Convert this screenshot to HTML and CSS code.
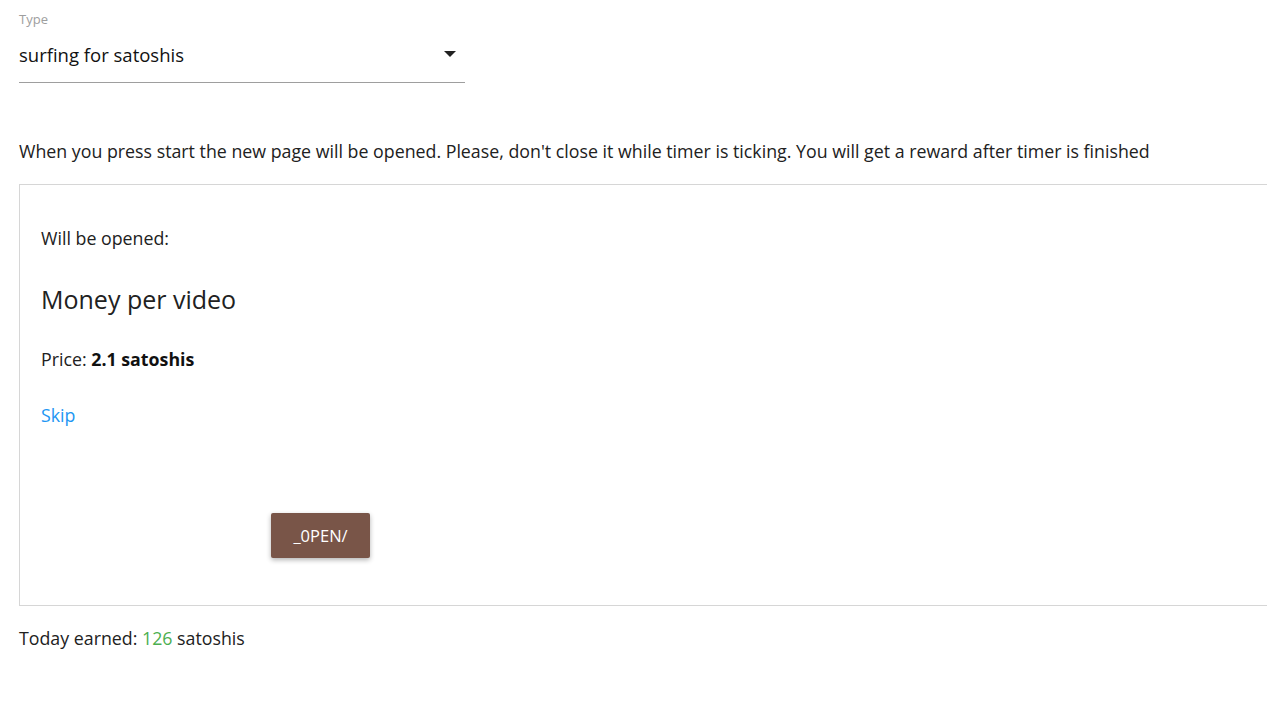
FILE: index.html
```html
<!DOCTYPE html>
<html lang="en">
<head>
    <meta charset="UTF-8">
    <meta name="viewport" content="width=device-width, initial-scale=1.0">
    <title>Surfing</title>
    <link rel="stylesheet" href="styles.css">
</head>
<body>
    <section class="surf-page">
        <div class="type-field">
            <label class="type-label">Type</label>
            <div class="type-select">
                <span>surfing for satoshis</span>
                <svg class="select-arrow" width="12" height="6" viewBox="0 0 12 6"><path d="M0 0h12L6 6z" fill="#222"/></svg>
            </div>
        </div>

        <p class="surf-hint">When you press start the new page will be opened. Please, don't close it while timer is ticking. You will get a reward after timer is finished</p>

        <div class="surf-box">
            <p class="will-open">Will be opened:</p>
            <h2 class="site-title">Money per video</h2>
            <p class="price">Price: <b>2.1 satoshis</b></p>
            <a href="#" class="skip-link">Skip</a>
            <div class="open-row">
                <button class="open-button">_0PEN/</button>
            </div>
        </div>

        <p class="earned">Today earned: <span class="earned-amount">126</span> satoshis</p>
    </section>
</body>
</html>
```
FILE: styles.css
```css
body {
    font-family: "Open Sans", "Noto Sans", sans-serif;
    color: #212121;
    margin: 0;
    padding: 0;
    background: #fff;
    overflow: hidden;
}

.surf-page {
    padding: 10px 0 0 19px;
}

.type-field {
    width: 446px;
}

.type-label {
    display: block;
    font-size: 13px;
    color: #9e9e9e;
    line-height: 18px;
}

.type-select {
    display: flex;
    justify-content: space-between;
    align-items: center;
    font-size: 18.5px;
    color: #111;
    height: 36px;
    padding: 8px 0 10px;
    border-bottom: 1px solid #9e9e9e;
}

.select-arrow {
    margin-right: 9px;
}

.surf-hint {
    font-size: 17.8px;
    margin: 56px 0 21px;
    line-height: 24px;
}

.surf-box {
    width: 1300px;
    border: 1px solid #d6d6d6;
    padding: 39px 21px 0;
    box-sizing: border-box;
    height: 422px;
}

.will-open {
    font-size: 17.8px;
    margin: 0;
    line-height: 28px;
}

.site-title {
    font-size: 25px;
    font-weight: normal;
    margin: 30px 0 0;
    line-height: 34px;
}

.price {
    font-size: 17.8px;
    margin: 31px 0 0;
    line-height: 24px;
}

.price b {
    color: #111;
}

.skip-link {
    display: inline-block;
    font-size: 17.8px;
    color: #2196f3;
    text-decoration: none;
    margin-top: 32px;
    line-height: 24px;
}

.open-row {
    margin-top: 86px;
    padding-left: 230px;
}

.open-button {
    font-family: inherit;
    background-color: #795548;
    color: #fff;
    border: none;
    border-radius: 2px;
    font-size: 16.5px;
    width: 99px;
    height: 45px;
    box-shadow: 0 2px 5px rgba(0,0,0,0.3);
    cursor: pointer;
}

.earned {
    font-size: 17.8px;
    margin: 20px 0;
    line-height: 24px;
}

.earned-amount {
    color: #4caf50;
}
```
